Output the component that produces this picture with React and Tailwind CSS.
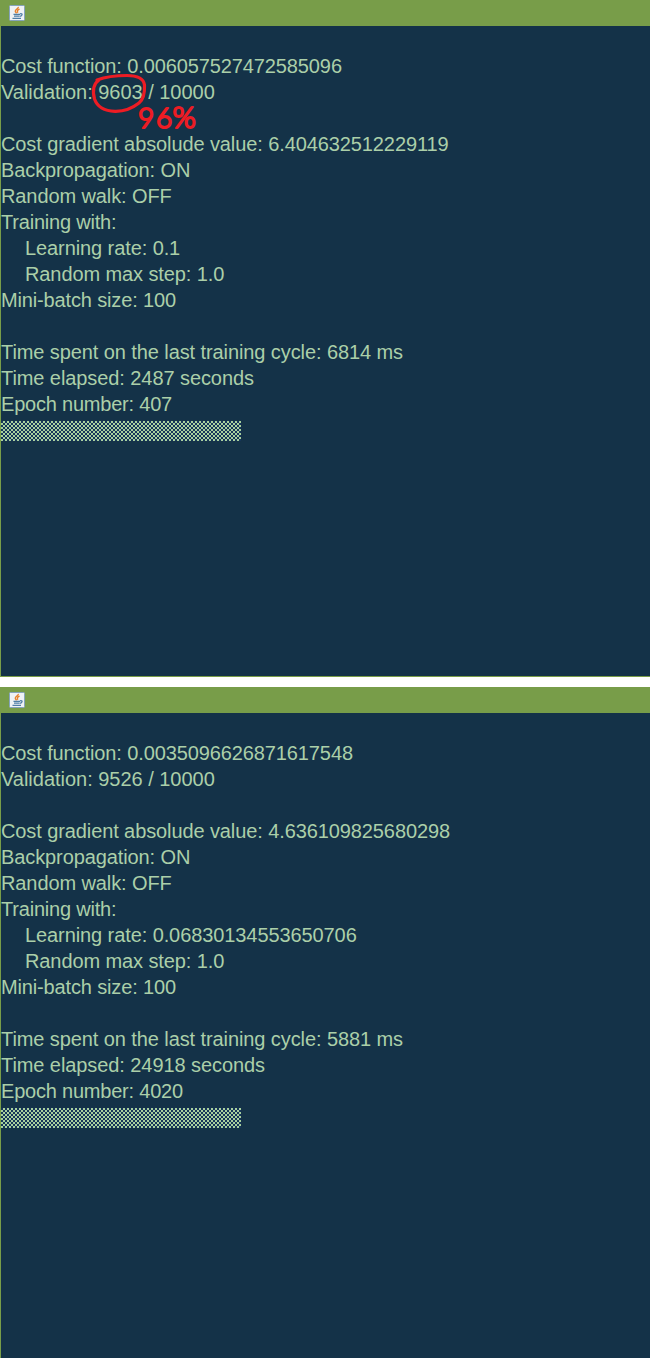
import React from "react";

const runs = [
  {
    height: "h-[677px] border-b",
    cost: "0.006057527472585096",
    validation: "9603",
    gradient: "6.404632512229119",
    rate: "0.1",
    cycle: "6814",
    elapsed: "2487",
    epoch: "407",
    annotated: true,
  },
  {
    height: "h-[671px]",
    cost: "0.0035096626871617548",
    validation: "9526",
    gradient: "4.636109825680298",
    rate: "0.06830134553650706",
    cycle: "5881",
    elapsed: "24918",
    epoch: "4020",
    annotated: false,
  },
];

function JavaIcon() {
  return (
    <svg width="16" height="16" viewBox="0 0 16 16">
      <rect x="0.5" y="0.5" width="15" height="15" rx="1" fill="#eff2f5" stroke="#86a3bb" />
      <path d="M9.300 1.800C9.800 4 6 4.300 6.300 6.300C6.500 7.300 7.300 7.500 7.500 8.300M10.600 4.200C8.300 5 8 6 8.800 7.800" fill="none" stroke="#e8822d" strokeWidth="1.400" />
      <path d="M4.500 9.300H11M5 11.200H10.500M3.500 13.300H12M11 8.800C14.200 8.200 13.500 11 10.800 11.300" fill="none" stroke="#4f7ea6" strokeWidth="1.200" />
    </svg>
  );
}

function Annotation() {
  return (
    <svg className="absolute left-[88px] top-[38px] overflow-visible text-[#ed1c24]" width="130" height="80" viewBox="0 -6 130 80">
      <path
        d="M8 10C16 7 29 5.500 38 5.500C48 5.500 54.500 8 55.500 15C55.800 22 55 29 50 33C43 38.500 35 41.500 26 41.300C15 41 8 36 5.500 29C3.500 21 4 14 10 10"
        fill="none"
        stroke="currentColor"
        strokeWidth="3.200"
        strokeLinecap="round"
      />
      <text
        x="49 67"
        y="57.500"
        fontFamily="Lato, sans-serif"
        fontSize="28"
        fontWeight="300"
        fill="currentColor"
        stroke="currentColor"
        strokeWidth="2"
        strokeLinejoin="round"
      >
        96
        <tspan x="83.500" fontSize="30">
          %
        </tspan>
      </text>
    </svg>
  );
}

function Progress() {
  return (
    <div className="mt-1 h-5 w-60 bg-[conic-gradient(#a8d09e_25%,#16345a_0_50%,#a8d09e_0_75%,#16345a_0)] bg-[length:4px_4px]" />
  );
}

function Line({ className = "", children }) {
  return <div className={`h-[26px] ${className}`}>{children}</div>;
}

function TrainingWindow({ run }) {
  return (
    <section className={`relative flex w-full flex-col border-l border-[#789d49] bg-[#143248] ${run.height}`}>
      <header className="flex h-[26px] shrink-0 items-center bg-[#789d49] pl-2">
        <JavaIcon />
      </header>
      <div className="relative flex flex-col whitespace-pre pt-[27px] font-['Liberation_Sans',Arial,sans-serif] text-[20px] leading-[26px] text-[#abcfa9]">
        <Line className="tracking-[-0.11px]">Cost function: {run.cost}</Line>
        <Line className="tracking-[-0.02px]">Validation: {run.validation} / 10000</Line>
        <Line />
        <Line className="tracking-[-0.1px]">Cost gradient absolude value: {run.gradient}</Line>
        <Line className="tracking-[-0.1px]">Backpropagation: ON</Line>
        <Line className="tracking-[-0.1px]">Random walk: OFF</Line>
        <Line className="tracking-[-0.2px]">Training with:</Line>
        <Line className="pl-6 tracking-[-0.09px]">Learning rate: {run.rate}</Line>
        <Line className="pl-6 tracking-[-0.1px]">Random max step: 1.0</Line>
        <Line className="tracking-[-0.15px]">Mini-batch size: 100</Line>
        <Line />
        <Line className="tracking-[-0.09px]">Time spent on the last training cycle: {run.cycle} ms</Line>
        <Line className="tracking-[-0.08px]">Time elapsed: {run.elapsed} seconds</Line>
        <Line className="tracking-[-0.21px]">Epoch number: {run.epoch}</Line>
        <Progress />
        {run.annotated && <Annotation />}
      </div>
    </section>
  );
}

export default function App() {
  return (
    <main className="flex h-[1358px] w-[650px] flex-col gap-2.5 overflow-hidden bg-white">
      {runs.map((run) => (
        <TrainingWindow key={run.epoch} run={run} />
      ))}
    </main>
  );
}
